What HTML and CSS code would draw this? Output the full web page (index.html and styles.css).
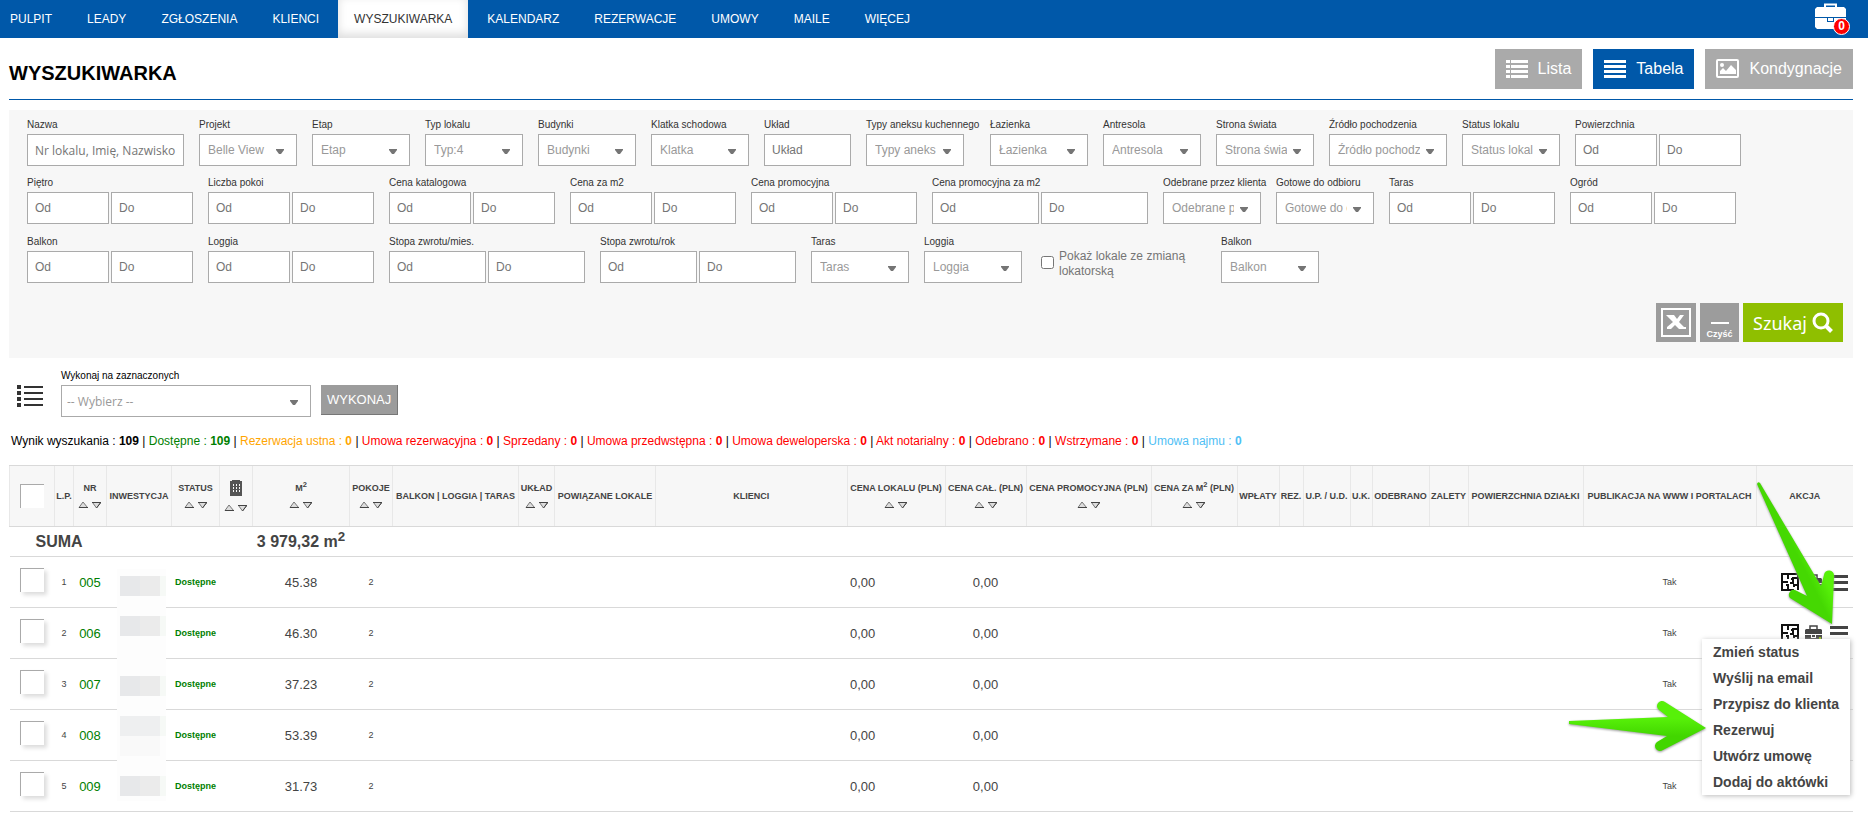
FILE: index.html
```html
<!DOCTYPE html>
<html lang="pl">
<head>
  <meta charset="UTF-8" />
  <title>Wyszukiwarka</title>
  <link rel="stylesheet" href="styles.css">
</head>
<body>

  <svg class="sprite" aria-hidden="true">
    <symbol id="i-plan" viewBox="0 0 18 18">
      <path fill="none" stroke="#111" stroke-width="2" d="M13 17H1V1h16v16M1 9h6M7 1v5M7 12v5M5 12h3M10 6h3M16 5h-4v5M9 10h4M16 12h-3v2" />
    </symbol>
    <symbol id="i-case" viewBox="0 0 20 24">
      <path fill="none" stroke="#444" stroke-width="1.500" d="M6 5V2h7v3" />
      <path fill="#444" d="M2 5h15l1 1v4H1V6z M1 11h6v3h5v-3h6v7l-1 1H2l-1-1z M8 11h3v2H8z" />
      <path fill="#8fbf00" d="M12 16h3v-3h2v3h3v2h-3v4h-2v-4h-3z" />
    </symbol>
    <symbol id="i-menu" viewBox="0 0 20 17">
      <path fill="#444" d="M1 1h18v3H1zM1 7h18v3H1zM1 14h18v3H1z" />
    </symbol>
    <symbol id="i-sort" viewBox="0 0 24 8">
      <path fill="#ddd" stroke="#777" d="M1 6.500L5 1l4.500 5.500z" />
      <path stroke="#444" d="M1 6.500h9" />
      <path fill="#ddd" stroke="#777" d="M14.500 1.500h8L18.500 7z" />
      <path stroke="#444" d="M14 1.500h9M22.500 2L18.500 7" />
    </symbol>
  </svg>

  <nav class="nav">
    <a href="#">PULPIT</a>
    <a href="#">LEADY</a>
    <a href="#">ZGŁOSZENIA</a>
    <a href="#">KLIENCI</a>
    <a href="#" class="active">WYSZUKIWARKA</a>
    <a href="#">KALENDARZ</a>
    <a href="#">REZERWACJE</a>
    <a href="#">UMOWY</a>
    <a href="#">MAILE</a>
    <a href="#">WIĘCEJ</a>
    <button class="briefcase" type="button" aria-label="Aktówka">
      <svg width="31" height="27" viewBox="0 0 31 27">
        <path fill="none" stroke="#fff" stroke-width="2" d="M10 5V1.500h11V5" />
        <path fill="#fff" d="M2 4h27l2 2v8H0V6z M0 15h12v4h7v-4h12v9l-2 2H2l-2-2z M13 15h5v3h-5z" />
      </svg>
      <span class="badge">0</span>
    </button>
  </nav>

  <main>
    <header class="page-head">
      <h1>WYSZUKIWARKA</h1>
      <div class="views">
        <button type="button">
          <svg width="22" height="18" viewBox="0 0 22 18"><path fill="#fff" d="M0 0h4v3H0zM5 0h17v3H5zM0 5h4v3H0zM5 5h17v3H5zM0 10h4v3H0zM5 10h17v3H5zM0 15h4v3H0zM5 15h17v3H5z" /></svg>
          Lista
        </button>
        <button type="button" class="current">
          <svg width="22" height="18" viewBox="0 0 22 18"><path fill="#fff" d="M0 0h22v3H0zM0 5h22v3H0zM0 10h22v3H0zM0 15h22v3H0z" /></svg>
          Tabela
        </button>
        <button type="button">
          <svg width="23" height="19" viewBox="0 0 23 19">
            <rect x="1" y="1" width="21" height="17" rx="1" fill="none" stroke="#fff" stroke-width="2" />
            <circle cx="6" cy="6" r="2" fill="#fff" />
            <path fill="#fff" d="M4 15v-3l3-3 3 3 5-6 5 5v4z" />
          </svg>
          Kondygnacje
        </button>
      </div>
    </header>

    <form class="filters">
      <div class="row">
        <div class="field name"><label for="nazwa">Nazwa</label><input id="nazwa" type="text" placeholder="Nr lokalu, Imię, Nazwisko"></div>
        <div class="field"><label for="projekt">Projekt</label><select id="projekt"><option>Belle View</option></select></div>
        <div class="field"><label for="etap">Etap</label><select id="etap"><option>Etap</option></select></div>
        <div class="field"><label for="typ">Typ lokalu</label><select id="typ"><option>Typ:4</option></select></div>
        <div class="field"><label for="budynki">Budynki</label><select id="budynki"><option>Budynki</option></select></div>
        <div class="field"><label for="klatka">Klatka schodowa</label><select id="klatka"><option>Klatka</option></select></div>
        <div class="field layout"><label for="uklad">Układ</label><input id="uklad" type="text" placeholder="Układ"></div>
        <div class="field kitchen"><label for="aneks">Typy aneksu kuchennego</label><select id="aneks"><option>Typy aneks</option></select></div>
        <div class="field"><label for="lazienka">Łazienka</label><select id="lazienka"><option>Łazienka</option></select></div>
        <div class="field"><label for="antresola">Antresola</label><select id="antresola"><option>Antresola</option></select></div>
        <div class="field"><label for="strona">Strona świata</label><select id="strona"><option>Strona świata</option></select></div>
        <div class="field source"><label for="zrodlo">Źródło pochodzenia</label><select id="zrodlo"><option>Źródło pochodzenia</option></select></div>
        <div class="field"><label for="status">Status lokalu</label><select id="status"><option>Status lokalu</option></select></div>
        <div class="field range"><label for="pow">Powierzchnia</label><input id="pow" type="text" placeholder="Od"><input type="text" placeholder="Do" aria-label="Powierzchnia do"></div>
      </div>
      <div class="row">
        <div class="field range"><label for="pietro">Piętro</label><input id="pietro" type="text" placeholder="Od"><input type="text" placeholder="Do" aria-label="Piętro do"></div>
        <div class="field range"><label for="pokoje">Liczba pokoi</label><input id="pokoje" type="text" placeholder="Od"><input type="text" placeholder="Do" aria-label="Liczba pokoi do"></div>
        <div class="field range"><label for="cenak">Cena katalogowa</label><input id="cenak" type="text" placeholder="Od"><input type="text" placeholder="Do" aria-label="Cena katalogowa do"></div>
        <div class="field range"><label for="cenam">Cena za m2</label><input id="cenam" type="text" placeholder="Od"><input type="text" placeholder="Do" aria-label="Cena za m2 do"></div>
        <div class="field range"><label for="cenap">Cena promocyjna</label><input id="cenap" type="text" placeholder="Od"><input type="text" placeholder="Do" aria-label="Cena promocyjna do"></div>
        <div class="field range wide"><label for="cenapm">Cena promocyjna za m2</label><input id="cenapm" type="text" placeholder="Od"><input type="text" placeholder="Do" aria-label="Cena promocyjna za m2 do"></div>
        <div class="field"><label for="odebrane">Odebrane przez klienta</label><select id="odebrane"><option>Odebrane przez klienta</option></select></div>
        <div class="field"><label for="gotowe">Gotowe do odbioru</label><select id="gotowe"><option>Gotowe do odbioru</option></select></div>
        <div class="field range"><label for="taras">Taras</label><input id="taras" type="text" placeholder="Od"><input type="text" placeholder="Do" aria-label="Taras do"></div>
        <div class="field range"><label for="ogrod">Ogród</label><input id="ogrod" type="text" placeholder="Od"><input type="text" placeholder="Do" aria-label="Ogród do"></div>
      </div>
      <div class="row">
        <div class="field range"><label for="balkon">Balkon</label><input id="balkon" type="text" placeholder="Od"><input type="text" placeholder="Do" aria-label="Balkon do"></div>
        <div class="field range"><label for="loggia">Loggia</label><input id="loggia" type="text" placeholder="Od"><input type="text" placeholder="Do" aria-label="Loggia do"></div>
        <div class="field range medium"><label for="zwrotm">Stopa zwrotu/mies.</label><input id="zwrotm" type="text" placeholder="Od"><input type="text" placeholder="Do" aria-label="Stopa zwrotu/mies. do"></div>
        <div class="field range medium"><label for="zwrotr">Stopa zwrotu/rok</label><input id="zwrotr" type="text" placeholder="Od"><input type="text" placeholder="Do" aria-label="Stopa zwrotu/rok do"></div>
        <div class="field"><label for="staras">Taras</label><select id="staras"><option>Taras</option></select></div>
        <div class="field"><label for="sloggia">Loggia</label><select id="sloggia"><option>Loggia</option></select></div>
        <div class="check"><input type="checkbox" id="zmiana"><label for="zmiana">Pokaż lokale ze zmianą lokatorską</label></div>
        <div class="field"><label for="sbalkon">Balkon</label><select id="sbalkon"><option>Balkon</option></select></div>
      </div>
      <div class="actions">
        <button type="button" class="excel" aria-label="Eksport do Excela">
          <svg width="30" height="29" viewBox="0 0 30 29">
            <rect x="1" y="1" width="28" height="27" fill="none" stroke="#fff" stroke-width="2" />
            <path fill="#fff" d="M5 7h8l3 4 3-4h4l-5 7 5 5h2v2h-7l-4-4-4 4H6v-2l6-5z" />
          </svg>
        </button>
        <button type="reset" class="clear">Czyść</button>
        <button type="submit" class="search">
          Szukaj
          <svg width="21" height="21" viewBox="0 0 21 21"><ellipse cx="9" cy="9" rx="7" ry="7" fill="none" stroke="#fff" stroke-width="3" /><path stroke="#fff" stroke-width="4" d="M13.500 13.500l6 6" /></svg>
        </button>
      </div>
    </form>

    <form class="bulk">
      <svg width="26" height="22" viewBox="0 0 26 22"><path fill="#333" d="M0 0h4v4H0zM7 1h19v2H7zM0 6h4v4H0zM7 7h19v2H7zM0 12h4v4H0zM7 13h19v2H7zM0 18h4v4H0zM7 19h19v2H7z" /></svg>
      <div class="field">
        <label for="bulk">Wykonaj na zaznaczonych</label>
        <select id="bulk"><option>-- Wybierz --</option></select>
      </div>
      <button type="button">WYKONAJ</button>
    </form>

    <p class="stats">
      Wynik wyszukania : <b>109</b> |
      <span class="green">Dostępne : <b>109</b></span> |
      <span class="orange">Rezerwacja ustna : <b>0</b></span> |
      <span class="red">Umowa rezerwacyjna : <b>0</b></span> |
      <span class="red">Sprzedany : <b>0</b></span> |
      <span class="red">Umowa przedwstępna : <b>0</b></span> |
      <span class="red">Umowa deweloperska : <b>0</b></span> |
      <span class="red">Akt notarialny : <b>0</b></span> |
      <span class="red">Odebrano : <b>0</b></span> |
      <span class="red">Wstrzymane : <b>0</b></span> |
      <span class="blue">Umowa najmu : <b>0</b></span>
    </p>

    <div class="results">
      <table>
        <colgroup>
          <col class="c45"><col class="c19"><col class="c33"><col class="c65"><col class="c48">
          <col class="c33"><col class="c97"><col class="c43"><col class="c126"><col class="c36">
          <col class="c101"><col><col class="c98"><col class="c81"><col class="c125">
          <col class="c86"><col class="c42"><col class="c24"><col class="c47"><col class="c22">
          <col class="c57"><col class="c39"><col class="c115"><col class="c173"><col class="c97">
        </colgroup>
        <thead>
          <tr>
            <th><input type="checkbox" aria-label="Zaznacz wszystkie"></th>
            <th>L.P.</th>
            <th>NR<svg class="sort"><use href="#i-sort" /></svg></th>
            <th>INWESTYCJA</th>
            <th>STATUS<svg class="sort"><use href="#i-sort" /></svg></th>
            <th>
              <svg class="building" width="12" height="16" viewBox="0 0 12 16"><path fill="#555" fill-rule="evenodd" d="M2 0h8v1h2v15H0V1h2zM3 4v2h1V4zM6 4v2h1V4zM9 4v2h1V4zM3 7v2h1V7zM6 7v2h1V7zM9 7v2h1V7zM3 10v2h1v-2zM6 10v2h1v-2zM9 10v2h1v-2z" /></svg>
              <svg class="sort"><use href="#i-sort" /></svg>
            </th>
            <th>M<sup>2</sup><svg class="sort"><use href="#i-sort" /></svg></th>
            <th>POKOJE<svg class="sort"><use href="#i-sort" /></svg></th>
            <th>BALKON | LOGGIA | TARAS</th>
            <th>UKŁAD<svg class="sort"><use href="#i-sort" /></svg></th>
            <th>POWIĄZANE LOKALE</th>
            <th>KLIENCI</th>
            <th>CENA LOKALU (PLN)<svg class="sort"><use href="#i-sort" /></svg></th>
            <th>CENA CAŁ. (PLN)<svg class="sort"><use href="#i-sort" /></svg></th>
            <th>CENA PROMOCYJNA (PLN)<svg class="sort"><use href="#i-sort" /></svg></th>
            <th>CENA ZA M<sup>2</sup> (PLN)<svg class="sort"><use href="#i-sort" /></svg></th>
            <th>WPŁATY</th>
            <th>REZ.</th>
            <th>U.P. / U.D.</th>
            <th>U.K.</th>
            <th>ODEBRANO</th>
            <th>ZALETY</th>
            <th>POWIERZCHNIA DZIAŁKI</th>
            <th>PUBLIKACJA NA WWW I PORTALACH</th>
            <th>AKCJA</th>
          </tr>
        </thead>
        <tbody>
          <tr class="sum">
            <td colspan="4">SUMA</td><td></td><td></td><td>3 979,32 m<sup>2</sup></td><td colspan="18"></td>
          </tr>
          <tr>
            <td><input type="checkbox" aria-label="Zaznacz 005"></td><td>1</td><td class="nr"><a href="#">005</a></td><td></td><td class="status">Dostępne</td><td></td><td class="num">45.38</td><td>2</td>
            <td></td><td></td><td></td><td></td><td class="num left">0,00</td><td class="num">0,00</td><td></td><td></td><td></td><td></td><td></td><td></td><td></td><td></td><td></td><td>Tak</td>
            <td>
              <div class="tools">
                <button type="button" aria-label="Rzut"><svg width="18" height="18"><use href="#i-plan" /></svg></button>
                <button type="button" aria-label="Do aktówki"><svg width="20" height="24"><use href="#i-case" /></svg></button>
                <button type="button" aria-label="Menu"><svg width="20" height="17"><use href="#i-menu" /></svg></button>
              </div>
            </td>
          </tr>
          <tr>
            <td><input type="checkbox" aria-label="Zaznacz 006"></td><td>2</td><td class="nr"><a href="#">006</a></td><td></td><td class="status">Dostępne</td><td></td><td class="num">46.30</td><td>2</td>
            <td></td><td></td><td></td><td></td><td class="num left">0,00</td><td class="num">0,00</td><td></td><td></td><td></td><td></td><td></td><td></td><td></td><td></td><td></td><td>Tak</td>
            <td>
              <div class="tools">
                <button type="button" aria-label="Rzut"><svg width="18" height="18"><use href="#i-plan" /></svg></button>
                <button type="button" aria-label="Do aktówki"><svg width="20" height="24"><use href="#i-case" /></svg></button>
                <button type="button" aria-label="Menu"><svg width="20" height="17"><use href="#i-menu" /></svg></button>
                <div class="menu">
                  <a href="#">Zmień status</a>
                  <a href="#">Wyślij na email</a>
                  <a href="#">Przypisz do klienta</a>
                  <a href="#">Rezerwuj</a>
                  <a href="#">Utwórz umowę</a>
                  <a href="#">Dodaj do aktówki</a>
                </div>
              </div>
            </td>
          </tr>
          <tr>
            <td><input type="checkbox" aria-label="Zaznacz 007"></td><td>3</td><td class="nr"><a href="#">007</a></td><td></td><td class="status">Dostępne</td><td></td><td class="num">37.23</td><td>2</td>
            <td></td><td></td><td></td><td></td><td class="num left">0,00</td><td class="num">0,00</td><td></td><td></td><td></td><td></td><td></td><td></td><td></td><td></td><td></td><td>Tak</td><td></td>
          </tr>
          <tr>
            <td><input type="checkbox" aria-label="Zaznacz 008"></td><td>4</td><td class="nr"><a href="#">008</a></td><td></td><td class="status">Dostępne</td><td></td><td class="num">53.39</td><td>2</td>
            <td></td><td></td><td></td><td></td><td class="num left">0,00</td><td class="num">0,00</td><td></td><td></td><td></td><td></td><td></td><td></td><td></td><td></td><td></td><td></td><td></td>
          </tr>
          <tr>
            <td><input type="checkbox" aria-label="Zaznacz 009"></td><td>5</td><td class="nr"><a href="#">009</a></td><td></td><td class="status">Dostępne</td><td></td><td class="num">31.73</td><td>2</td>
            <td></td><td></td><td></td><td></td><td class="num left">0,00</td><td class="num">0,00</td><td></td><td></td><td></td><td></td><td></td><td></td><td></td><td></td><td></td><td>Tak</td><td></td>
          </tr>
        </tbody>
      </table>

      <!-- hidden investment names -->
      <svg class="redacted" width="49" height="232" viewBox="0 0 49 232">
        <path fill="#fdfdfd" d="M0 0h49v232H0z" />
        <path fill="#e7e8ea" d="M3 7h20v20H3zM3 47h20v20H3zM3 107h20v20H3zM3 207h20v20H3z" />
        <path fill="#ebebeb" d="M23 7h20v20H23zM23 47h20v20H23zM23 107h20v20H23zM23 207h20v20H23z" />
        <path fill="#f6f9f6" d="M43 7h6v20h-6zM43 47h6v20h-6zM43 107h6v20h-6zM43 147h6v20h-6zM43 207h6v20h-6z" />
        <path fill="#eeeff0" d="M3 147h40v20H3z" />
        <path fill="#f9f9f9" d="M3 167h40v20H3z" />
      </svg>

      <svg class="arrows" width="300" height="300" viewBox="1560 470 300 300">
        <defs>
          <linearGradient id="g1" gradientUnits="userSpaceOnUse" x1="1796" y1="567" x2="1814" y2="558"><stop offset="0.300" stop-color="#45d802" /><stop offset="1" stop-color="#57f009" /></linearGradient>
          <linearGradient id="g2" x1="0" y1="0" x2="0" y2="1"><stop offset="0.350" stop-color="#57f009" /><stop offset="0.700" stop-color="#42d600" /></linearGradient>
        </defs>
        <path fill="url(#g1)" d="M1757 485L1807 597L1795 591A5 5 0 0 0 1790 599L1832 625L1834 577A5 5 0 0 0 1824 576L1821 587L1760 484Q1758 482 1757 485z" />
        <path fill="url(#g2)" d="M1569 722L1668 718L1659 711A5 5 0 0 1 1665 703L1706 729L1663 751A5 5 0 0 1 1657 743L1667 737L1569 725z" />
      </svg>
    </div>
  </main>

</body>
</html>
```
FILE: styles.css
```css
* {
  box-sizing: border-box;
}
body {
  margin: 0;
  font-family: "Liberation Sans", Arial, sans-serif;
  font-size: 12px;
  color: #000;
  background: #fff;
}
a {
  text-decoration: none;
}
button, input, select {
  font-family: inherit;
  margin: 0;
}
button {
  border: 0;
  padding: 0;
  color: #fff;
  cursor: pointer;
}
.sprite {
  display: none;
}

/* top bar */
.nav {
  display: flex;
  gap: 3px;
  height: 38px;
  background: #0058a9;
}
.nav a {
  padding: 0 16px;
  line-height: 38px;
  color: #fff;
}
.nav a:first-child {
  padding-left: 10px;
}
.nav a.active {
  background: #fff;
  color: #333;
  box-shadow: inset 0 -4px 10px #ddd;
}
.briefcase {
  position: relative;
  align-self: start;
  margin: 3px 22px 0 auto;
  height: 27px;
  background: none;
}
.badge {
  position: absolute;
  left: 18px;
  top: 15px;
  width: 17px;
  height: 17px;
  border: 1px solid #fff;
  border-radius: 50%;
  background: #f00;
  font-size: 12px;
  font-weight: bold;
  line-height: 15px;
}

main {
  padding: 0 15px 0 9px;
}
.page-head {
  display: flex;
  justify-content: space-between;
  align-items: center;
  height: 62px;
  border-bottom: 1px solid #0058a9;
}
h1 {
  margin: 8px 0 0;
  font-size: 20px;
  line-height: 24px;
}
.views {
  display: flex;
  gap: 11px;
}
.views button {
  display: flex;
  align-items: center;
  gap: 10px;
  height: 40px;
  padding: 0 11px;
  background: #aaa;
  font-size: 16px;
}
.views .current {
  background: #0058a9;
}

/* filters */
.filters {
  margin-top: 10px;
  padding: 8px 10px 16px 18px;
  background: #f7f7f7;
}
.row {
  display: flex;
  gap: 15px;
  margin-bottom: 10px;
}
.row:nth-child(2) {
  margin-bottom: 11px;
}
.field {
  width: 98px;
}
.field label {
  display: block;
  height: 16px;
  font-size: 10px;
  line-height: 14px;
  color: #333;
  white-space: nowrap;
}
.field input, .field select {
  height: 32px;
  border: 1px solid #aaa;
  border-radius: 0;
  background: #fff;
  font-size: 12px;
}
.field input {
  width: 100%;
  padding: 0 7px;
}
.field input::placeholder {
  color: #757575;
}
.field select {
  appearance: none;
  width: 98px;
  padding: 0 26px 0 8px;
  color: #999;
  background: #fff url("data:image/svg+xml,%3Csvg xmlns='http://www.w3.org/2000/svg' width='8' height='5'%3E%3Cpath fill='%23757575' d='M0 0h8v1L5 5H3L0 1z'/%3E%3C/svg%3E") no-repeat right 12px top 14px;
}
.name {
  width: 157px;
}
.field.name input {
  font-family: "Open Sans", sans-serif;
}
.layout {
  width: 87px;
}
.kitchen {
  width: 109px;
}
.source, .source select {
  width: 118px;
}
.range {
  display: grid;
  grid-template-columns: 82px 82px;
  column-gap: 2px;
  width: auto;
}
.range label {
  grid-column: 1 / 3;
}
.medium {
  grid-template-columns: 97px 97px;
}
.wide {
  grid-template-columns: 107px 107px;
}
.check {
  display: flex;
  gap: 5px;
  align-items: flex-start;
  width: 169px;
  padding: 14px 20px 0 4px;
}
.check input {
  flex: none;
  width: 13px;
  height: 13px;
  margin-top: 7px;
}
.check label {
  line-height: 15px;
  color: #757575;
}
.actions {
  display: flex;
  justify-content: flex-end;
  gap: 4px;
  padding-top: 10px;
}
.actions button {
  height: 39px;
  background: #9c9c9c;
}
.excel {
  width: 40px;
}
.excel svg {
  display: block;
  margin: auto;
}
.clear {
  display: flex;
  flex-direction: column;
  align-items: center;
  justify-content: flex-end;
  width: 39px;
  padding-bottom: 2px;
  font-size: 9px;
  font-weight: bold;
  line-height: 12px;
}
.clear::before {
  content: "";
  width: 18px;
  height: 2px;
  margin-bottom: 4px;
  background: #fff;
}
.actions .search {
  display: flex;
  align-items: center;
  justify-content: center;
  gap: 5px;
  width: 100px;
  background: #8fbf00;
  font-family: "Noto Sans", sans-serif;
  font-size: 18px;
}

/* bulk action */
.bulk {
  display: flex;
  align-items: flex-end;
  padding: 11px 0 0 8px;
}
.bulk > svg {
  margin: 0 18px 10px 0;
}
.bulk .field {
  width: 250px;
}
.bulk .field label {
  color: #000;
}
.bulk .field select {
  width: 100%;
  padding-left: 5px;
  font-family: "Open Sans", sans-serif;
}
.bulk button {
  height: 30px;
  margin: 0 0 2px 10px;
  padding: 0 6px;
  border-right: 1px solid #777;
  border-bottom: 1px solid #777;
  background: #9c9c9c;
  font-size: 13px;
}

.stats {
  margin: 16px 0;
  padding-left: 2px;
  line-height: 16px;
}
.green { color: #008000; }
.orange { color: #ffa500; }
.red { color: #f00; }
.blue { color: #4fc0f5; }

/* results */
.results {
  position: relative;
}
table {
  width: 100%;
  table-layout: fixed;
  border-collapse: collapse;
  color: #444;
}
.c19 { width: 19px; }
.c22 { width: 22px; }
.c24 { width: 24px; }
.c33 { width: 33px; }
.c36 { width: 36px; }
.c39 { width: 39px; }
.c42 { width: 42px; }
.c43 { width: 43px; }
.c45 { width: 45px; }
.c47 { width: 47px; }
.c48 { width: 48px; }
.c57 { width: 57px; }
.c65 { width: 65px; }
.c81 { width: 81px; }
.c86 { width: 86px; }
.c97 { width: 97px; }
.c98 { width: 98px; }
.c101 { width: 101px; }
.c115 { width: 115px; }
.c125 { width: 125px; }
.c126 { width: 126px; }
.c173 { width: 173px; }
th, td {
  padding: 0;
  text-align: center;
  font-size: 9px;
  white-space: nowrap;
}
thead tr {
  height: 61px;
  background: #f7f7f7;
}
th {
  border: 1px solid #e8e8e8;
  border-width: 1px 0 1px 1px;
  border-top-color: #d9d9d9;
  border-bottom-color: #d9d9d9;
}
sup {
  line-height: 0;
}
.sort {
  display: block;
  width: 24px;
  height: 8px;
  margin: 8px auto 0;
}
.building {
  display: block;
  margin: auto;
}
tbody tr {
  height: 51px;
  border-bottom: 1px solid #d9d9d9;
}
tbody .sum {
  height: 30px;
}
.sum td {
  font-size: 16px;
  font-weight: bold;
}
.sum td:first-child {
  padding-left: 26px;
  text-align: left;
}
th input, td input {
  appearance: none;
  display: block;
  width: 24px;
  height: 24px;
  margin: 0 0 0 10px;
  border: 1px solid #aaa;
  border-width: 1px 0 0 1px;
  background: #fff;
}
td input {
  margin-bottom: 4px;
  box-shadow: 3px 3px 4px #ddd;
}
.nr a {
  font-size: 13px;
  color: #008000;
}
.status {
  font-weight: bold;
  color: #008000;
}
.num {
  font-size: 13px;
}
.left {
  padding-left: 3px;
  text-align: left;
}
.tools {
  position: relative;
  display: flex;
  align-items: center;
  justify-content: flex-end;
  gap: 5px;
  height: 24px;
  padding-right: 4px;
}
.tools button {
  height: 18px;
  background: none;
}
.tools svg {
  display: block;
}
.menu {
  position: absolute;
  z-index: 1;
  top: 18px;
  right: 3px;
  width: 148px;
  background: #fff;
  box-shadow: 1px 1px 5px #bbb;
}
.menu a {
  display: block;
  padding-left: 11px;
  text-align: left;
  font-size: 14px;
  font-weight: bold;
  line-height: 26px;
  color: #444;
}

.redacted {
  position: absolute;
  top: 104px;
  left: 108px;
}
.arrows {
  position: absolute;
  z-index: 2;
  top: 4px;
  right: -7px;
  pointer-events: none;
  filter: drop-shadow(0 1px 1px #999);
}
```
